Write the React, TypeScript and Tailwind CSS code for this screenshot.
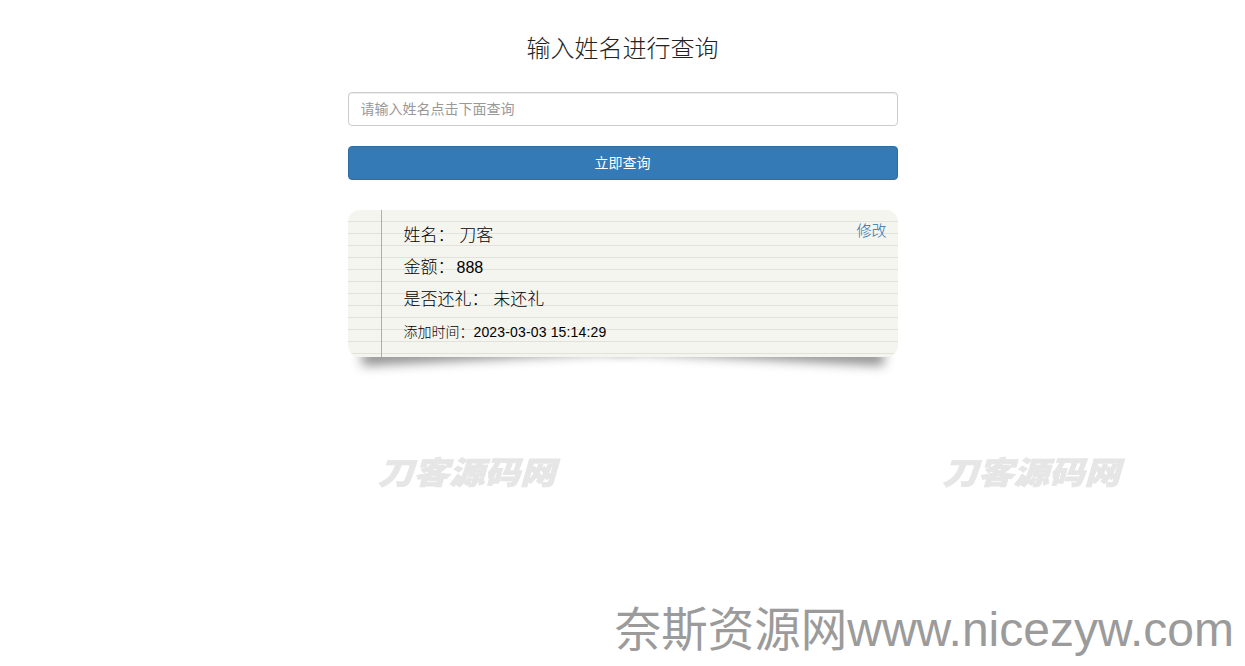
export default function App() {
  const row = "h-[32px] leading-[32px] whitespace-nowrap";
  const mark = "select-none whitespace-nowrap text-[35.5px] font-black italic leading-[36px] text-[#e6e6e6] blur-[0.5px] scale-y-[0.88] [-webkit-text-stroke:0.8px_#e6e6e6]";
  return (
    <div className="flex h-[666px] flex-col overflow-hidden bg-white font-['Liberation_Sans','Noto_Sans_CJK_SC',sans-serif]">
      <main className="isolate mx-auto flex w-[550px] flex-col pt-[32px]">
        <h2 className="text-center text-[24px] font-light leading-[33px] text-[#222]">输入姓名进行查询</h2>
        <input
          placeholder="请输入姓名点击下面查询"
          className="mt-[27px] block h-[34px] w-full rounded border border-[#ccc] bg-white px-3 text-[14px] shadow-[inset_0_1px_1px_rgba(0,0,0,0.075)] outline-none placeholder:text-[#999]"
        />
        <button className="mt-[20px] block h-[34px] w-full rounded border border-[#2e6da4] bg-[#337ab7] text-[14px] text-white">
          立即查询
        </button>
        <section className="relative mt-[30px] flex h-[147px] flex-col rounded-[12px] bg-[#f5f5f0] bg-[linear-gradient(to_right,transparent_33px,#c9a3a0_33px,#c9a3a0_34px,transparent_34px),repeating-linear-gradient(to_bottom,transparent_0,transparent_11px,#e2e2dd_11px,#e2e2dd_12px)] pl-[56px] pr-[11px] pt-[10px] text-black">
          <div aria-hidden className="absolute bottom-[15px] left-[13px] top-[80%] -z-10 w-1/2 -rotate-3 shadow-[0_16px_12px_#888]" />
          <div aria-hidden className="absolute bottom-[15px] right-[13px] top-[80%] -z-10 w-1/2 rotate-3 shadow-[0_16px_12px_#888]" />
          <div className="flex items-start justify-between">
            <p className={`${row} text-[17px] font-light`}>姓名： 刀客</p>
            <a className="mt-[1px] text-[15px] font-light leading-[20px] text-[#2a6fae]">修改</a>
          </div>
          <p className={`${row} text-[17px] font-light`}>金额：<span className="ml-[2px] text-[16px] font-normal">888</span></p>
          <p className={`${row} text-[17px] font-light`}>是否还礼： 未还礼</p>
          <p className={`${row} text-[14px] font-light`}>
            添加时间：<span className="font-normal tracking-[0.15px]">2023-03-03 15:14:29</span>
          </p>
        </section>
      </main>
      <div className="mt-[98px] flex h-[36px] gap-[387px] pl-[378px]">
        <div className={mark}>刀客源码网</div>
        <div className={mark}>刀客源码网</div>
      </div>
      <div className="mt-[109px] flex h-[60px] items-center justify-end whitespace-nowrap pr-[11px] text-[48px] leading-[60px] text-[#9b9b9b]">
        <span className="text-[46.5px]">奈斯资源网</span>www.nicezyw.com
      </div>
    </div>
  );
}
